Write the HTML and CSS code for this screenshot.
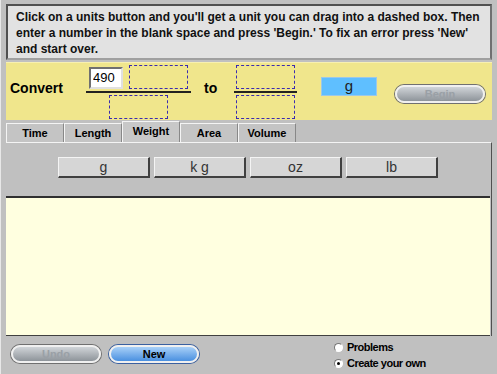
FILE: index.html
```html
<!DOCTYPE html>
<html lang="en">
<head>
    <meta charset="UTF-8">
    <title>Unit Conversion</title>
    <link rel="stylesheet" href="styles.css">
</head>
<body>
    <div class="app">
        <div class="instructions">
            Click on a units button and you'll get a unit you can drag into a dashed box. Then
            enter a number in the blank space and press 'Begin.' To fix an error press 'New'
            and start over.
        </div>

        <div class="convert-bar">
            <span class="label">Convert</span>
            <div class="fraction first">
                <div class="top">
                    <input type="text" class="num" value="490">
                    <div class="drop"></div>
                </div>
                <div class="bar"></div>
                <div class="bottom"><div class="drop"></div></div>
            </div>
            <span class="label to">to</span>
            <div class="fraction second">
                <div class="top"><div class="drop"></div></div>
                <div class="bar"></div>
                <div class="bottom"><div class="drop"></div></div>
            </div>
            <div class="unit-chip">g</div>
            <button class="pill gray begin">Begin</button>
        </div>

        <div class="tabs">
            <div class="tab">Time</div>
            <div class="tab">Length</div>
            <div class="tab active">Weight</div>
            <div class="tab">Area</div>
            <div class="tab">Volume</div>
        </div>

        <div class="tab-panel">
            <div class="units">
                <button class="unit">g</button>
                <button class="unit">k g</button>
                <button class="unit">oz</button>
                <button class="unit">lb</button>
            </div>
            <div class="workspace"></div>
        </div>

        <div class="footer">
            <button class="pill gray">Undo</button>
            <button class="pill blue">New</button>
            <div class="modes">
                <label><span class="radio"></span>Problems</label>
                <label><span class="radio on"></span>Create your own</label>
            </div>
        </div>
    </div>
</body>
</html>
```

FILE: styles.css
```css
body {
    margin: 0;
    font-family: "Liberation Sans", Arial, sans-serif;
    background-color: #c0c0c0;
}

.app {
    width: 497px;
    height: 374px;
    box-sizing: border-box;
    padding: 4px 5px 0 5px;
    border-left: 1px solid #e8e8e8;
    display: flex;
    flex-direction: column;
}

.instructions {
    height: 56px;
    box-sizing: border-box;
    padding: 3px 8px;
    background-color: #e2e2e2;
    border: 2px solid #505050;
    border-right-color: #707070;
    border-bottom-color: #a0a0a0;
    font-weight: bold;
    font-size: 12px;
    line-height: 16px;
    color: #111;
}

.convert-bar {
    height: 58px;
    margin-top: 2px;
    background-color: #f0e68c;
    border-top: 1px solid #f8f0b0;
    display: flex;
    align-items: center;
    box-sizing: border-box;
}

.label {
    font-weight: bold;
    font-size: 14px;
    margin-left: 4px;
    margin-bottom: 7px;
    width: 76px;
}

.label.to {
    width: 30px;
    margin-left: 13px;
}

.fraction {
    display: flex;
    flex-direction: column;
    align-items: center;
}

.fraction .top {
    display: flex;
    gap: 6px;
    align-items: flex-end;
}

.fraction .bar {
    height: 2px;
    background-color: #222;
    margin: 2px 0;
    align-self: stretch;
}

.fraction.first .bar { width: 105px; }
.fraction.second .bar { width: 63px; }

.drop {
    width: 57px;
    height: 22px;
    border: 1px dashed #3a2bb0;
}

.num {
    width: 34px;
    height: 22px;
    box-sizing: border-box;
    padding: 0 2px;
    border: 2px solid #707070;
    border-right-color: #e0e0e0;
    border-bottom-color: #e0e0e0;
    background-color: #fff;
    font-family: "Liberation Sans", Arial, sans-serif;
    font-size: 13px;
}

.unit-chip {
    width: 54px;
    height: 17px;
    margin-left: 24px;
    margin-top: -10px;
    background-color: #5fbfff;
    border: 1px solid #9cc8e8;
    text-align: center;
    font-size: 15px;
    line-height: 15px;
    color: #222;
}

.pill {
    width: 90px;
    height: 18px;
    box-sizing: border-box;
    border-radius: 9px;
    font-family: "Liberation Sans", Arial, sans-serif;
    font-weight: bold;
    font-size: 11px;
    padding: 0;
    cursor: pointer;
}

.pill.gray {
    background: linear-gradient(#d0d4d8, #8e949a);
    border: 2px solid #f0f0f0;
    box-shadow: 0 0 0 1px #707070;
    color: #9aa0a6;
}

.pill.blue {
    background: linear-gradient(#a8d0f8, #4a90e0);
    border: 2px solid #f0f0f0;
    box-shadow: 0 0 0 1px #3a60a0;
    color: #000;
}

.begin {
    margin-left: 18px;
    margin-top: 5px;
}

.tabs {
    display: flex;
    height: 21px;
    margin-top: 1px;
    align-items: flex-end;
}

.tab {
    width: 58px;
    height: 19px;
    box-sizing: border-box;
    border: 1px solid #888;
    border-top-color: #f4f4f4;
    border-left-color: #f4f4f4;
    border-bottom: none;
    font-weight: bold;
    font-size: 11px;
    text-align: center;
    line-height: 19px;
    background-color: #c4c4c4;
}

.tab.active {
    height: 21px;
    line-height: 18px;
    background-color: #c8c8c8;
}

.tab-panel {
    border-top: 1px solid #f4f4f4;
    border-right: 1px solid #505050;
    height: 193px;
    display: flex;
    flex-direction: column;
}

.units {
    height: 53px;
    display: flex;
    gap: 4px;
    padding: 14px 0 0 52px;
    box-sizing: border-box;
}

.unit {
    width: 92px;
    height: 21px;
    background-color: #d6d6d6;
    border: 1px solid #f4f4f4;
    border-right: 2px solid #404040;
    border-bottom: 2px solid #404040;
    font-family: "Liberation Sans", Arial, sans-serif;
    font-size: 14px;
    color: #333;
    padding: 0;
}

.workspace {
    flex: 1;
    background-color: #ffffe0;
    border-top: 2px solid #303030;
    border-bottom: 1px solid #404040;
    margin-right: 1px;
}

.footer {
    display: flex;
    align-items: flex-start;
    padding-top: 8px;
    gap: 8px;
}

.footer .pill {
    margin-top: 1px;
}

.footer .gray {
    margin-left: 5px;
}

.modes {
    margin-left: 127px;
    margin-top: -3px;
    display: flex;
    flex-direction: column;
    font-weight: bold;
    font-size: 11px;
    letter-spacing: -0.5px;
    gap: 4px;
}

.modes label {
    display: flex;
    align-items: center;
    gap: 4px;
}

.radio {
    width: 9px;
    height: 9px;
    border-radius: 50%;
    background-color: #fff;
    border: 1px solid #777;
    border-right-color: #fff;
    border-bottom-color: #fff;
    box-sizing: border-box;
    position: relative;
}

.radio.on::after {
    content: "";
    position: absolute;
    left: 2px;
    top: 2px;
    width: 3px;
    height: 3px;
    background-color: #000;
    border-radius: 50%;
}
```
